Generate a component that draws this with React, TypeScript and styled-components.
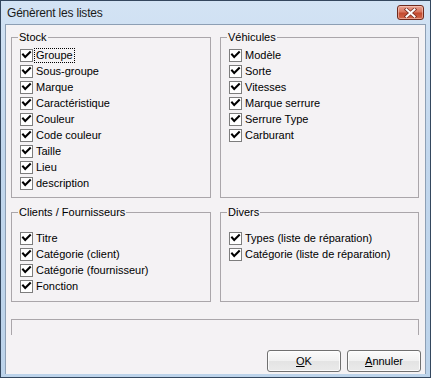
import React from 'react';
import styled, { createGlobalStyle } from 'styled-components';

const GlobalStyle = createGlobalStyle`
  html, body {
    margin: 0;
    padding: 0;
    background: #ffffff;
  }
  body {
    font-family: "Liberation Sans", Arial, sans-serif;
    font-size: 11px;
    color: #000;
  }
`;

const Window = styled.div`
  box-sizing: border-box;
  width: 431px;
  height: 378px;
  display: flex;
  flex-direction: column;
  padding: 0 4px 3px 4px;
  border: 1px solid #34475e;
  background: linear-gradient(180deg, #d3e3f4 0%, #c2d7ed 40%, #bcd3ea 100%);
`;

const TitleBar = styled.div`
  height: 23px;
  display: flex;
  align-items: center;
  justify-content: space-between;
  padding: 0 2px 0 2px;
  flex-shrink: 0;
`;

const Title = styled.span`
  font-family: "Liberation Sans", Arial, sans-serif;
  font-size: 12px;
  letter-spacing: -0.2px;
  color: #1a1a1a;
`;

const CloseButton = styled.div`
  box-sizing: border-box;
  width: 27px;
  height: 15px;
  border: 1px solid #6f2a1d;
  border-radius: 3px;
  display: flex;
  align-items: center;
  justify-content: center;
  background: linear-gradient(180deg, #eaa391 0%, #d9765f 45%, #c34a2f 55%, #d4684b 100%);
  box-shadow: inset 0 0 0 1px rgba(255, 220, 210, 0.5);
`;

const ClientArea = styled.div`
  flex: 1;
  box-sizing: border-box;
  display: flex;
  flex-direction: column;
  padding: 12px 4px 0 5px;
  border: 1px solid #8d9fb4;
  border-bottom: none;
  background: #f4f2f4;
`;

const Grid = styled.div`
  display: grid;
  grid-template-columns: 200px 199px;
  grid-template-rows: 161px 90px;
  column-gap: 9px;
  row-gap: 14px;
`;

const Group = styled.div<{ $top: number }>`
  position: relative;
  box-sizing: border-box;
  border: 1px solid #aaa6aa;
  padding: ${p => p.$top}px 0 0 8px;
  display: flex;
  flex-direction: column;
`;

const Legend = styled.span`
  position: absolute;
  top: -7px;
  left: 6px;
  padding: 0 1px;
  line-height: 13px;
  background: #f4f2f4;
`;

const Item = styled.label`
  height: 16px;
  display: flex;
  align-items: center;
  gap: 3px;
  white-space: nowrap;
`;

const Box = styled.span`
  width: 13px;
  height: 13px;
  flex-shrink: 0;
  display: block;
`;

const Text = styled.span<{ $focused?: boolean }>`
  line-height: 13px;
  padding: 0 1px;
  margin-left: -1px;
  outline: ${p => (p.$focused ? '1px dotted #000' : 'none')};
  outline-offset: 0;
`;

const StatusPanel = styled.div`
  width: 408px;
  height: 16px;
  margin-top: 17px;
  box-sizing: border-box;
  border: 1px solid #aaa6aa;
  border-bottom: none;
`;

const ButtonRow = styled.div`
  display: flex;
  justify-content: flex-end;
  gap: 6px;
  margin-top: 15px;
`;

const Button = styled.button`
  box-sizing: border-box;
  width: 74px;
  height: 22px;
  padding: 0;
  border: 1px solid #707070;
  border-radius: 3px;
  font-family: "Liberation Sans", Arial, sans-serif;
  font-size: 11px;
  color: #000;
  background: linear-gradient(180deg, #fbfbfb 0%, #f1f1f1 48%, #e4e4e4 52%, #eaeaea 100%);
  box-shadow: inset 0 0 0 1px rgba(255, 255, 255, 0.8);
`;

const Key = styled.span`
  text-decoration: underline;
`;

function Check() {
  return (
    <Box>
      <svg width="13" height="13" viewBox="0 0 13 13">
        <rect x="0.5" y="0.5" width="12" height="12" fill="#fff" stroke="#7d7d7d" />
        <path d="M3 5.5 L5.2 8 L10 3.2" fill="none" stroke="#000" strokeWidth="2" strokeLinecap="square" />
      </svg>
    </Box>
  );
}

interface ListProps {
  title: string;
  items: string[];
  top: number;
  focusFirst?: boolean;
}

function CheckGroup({ title, items, top, focusFirst }: ListProps) {
  return (
    <Group $top={top}>
      <Legend>{title}</Legend>
      {items.map((it, i) => (
        <Item key={it}>
          <Check />
          <Text $focused={focusFirst && i === 0}>{it}</Text>
        </Item>
      ))}
    </Group>
  );
}

const stock = ['Groupe', 'Sous-groupe', 'Marque', 'Caractéristique', 'Couleur', 'Code couleur', 'Taille', 'Lieu', 'description'];
const vehicules = ['Modèle', 'Sorte', 'Vitesses', 'Marque serrure', 'Serrure Type', 'Carburant'];
const clients = ['Titre', 'Catégorie (client)', 'Catégorie (fournisseur)', 'Fonction'];
const divers = ['Types (liste de réparation)', 'Catégorie (liste de réparation)'];

export default function App() {
  return (
    <>
      <GlobalStyle />
      <Window>
        <TitleBar>
          <Title>Génèrent les listes</Title>
          <CloseButton>
            <svg width="13" height="10" viewBox="0 0 13 10">
              <path d="M2.5 1.5 L10.5 8.5 M10.5 1.5 L2.5 8.5" stroke="#7a2f22" strokeWidth="3.6" strokeLinecap="square" />
              <path d="M2.5 1.5 L10.5 8.5 M10.5 1.5 L2.5 8.5" stroke="#fff" strokeWidth="2" strokeLinecap="square" />
            </svg>
          </CloseButton>
        </TitleBar>
        <ClientArea>
          <Grid>
            <CheckGroup title="Stock" items={stock} top={9} focusFirst />
            <CheckGroup title="Véhicules" items={vehicules} top={9} />
            <CheckGroup title="Clients / Fournisseurs" items={clients} top={17} />
            <CheckGroup title="Divers" items={divers} top={17} />
          </Grid>
          <StatusPanel />
          <ButtonRow>
            <Button><Key>O</Key>K</Button>
            <Button><Key>A</Key>nnuler</Button>
          </ButtonRow>
        </ClientArea>
      </Window>
    </>
  );
}
